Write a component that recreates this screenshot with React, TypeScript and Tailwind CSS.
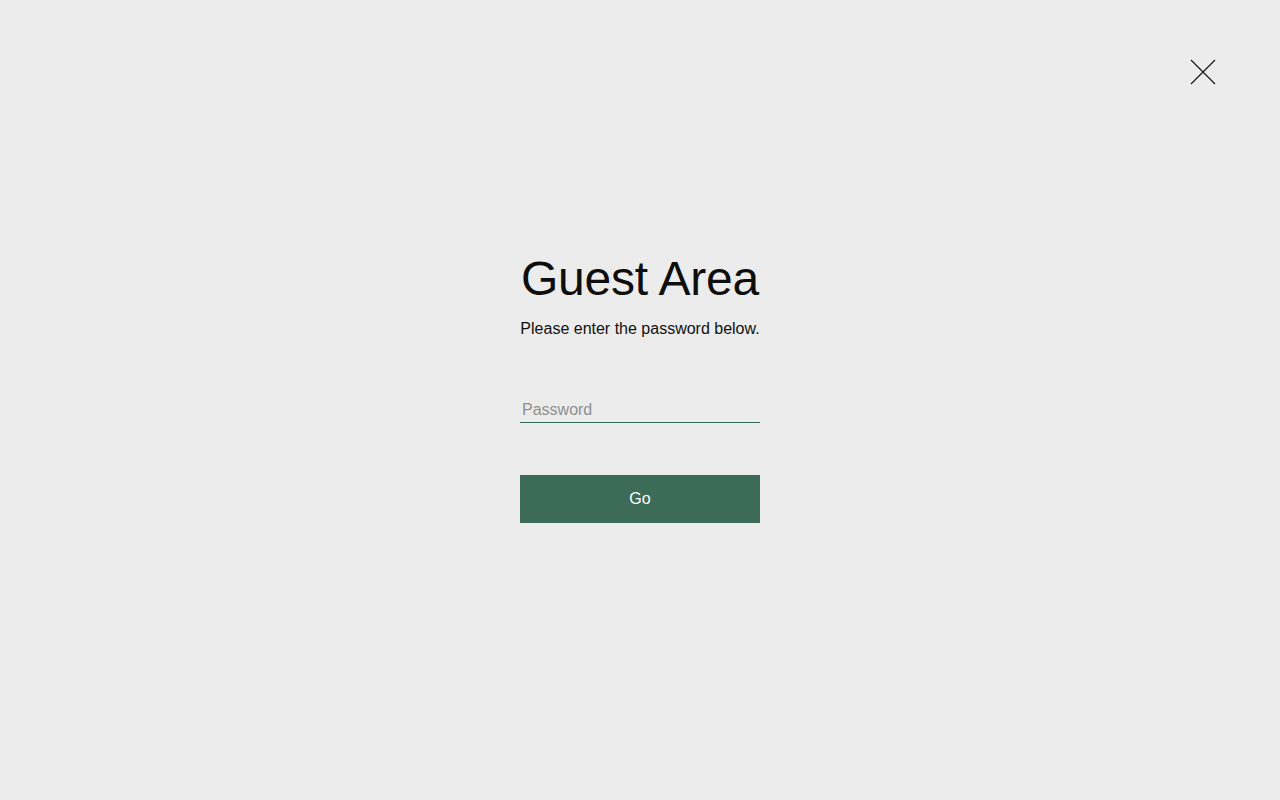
export default function App() {
  return (
    <div
      className="relative min-h-[800px] w-full bg-[#ececec] text-[#111]"
      style={{ fontFamily: '"Liberation Sans", Arial, sans-serif' }}
    >
      {/* Close */}
      <button className="absolute right-[64px] top-[59px] h-[26px] w-[26px]" aria-label="Close">
        <svg viewBox="0 0 26 26" className="h-[26px] w-[26px]" fill="none" stroke="#111" strokeWidth="1.1">
          <path d="M1 1 L25 25 M25 1 L1 25" />
        </svg>
      </button>

      <main className="flex justify-center pt-[255px]">
        <div className="flex w-[240px] flex-col items-center">
          <h1 className="whitespace-nowrap text-center text-[48px] leading-none font-normal tracking-[-0.2px] text-[#0e0e0e]">
            Guest Area
          </h1>
          <p className="mt-[14px] whitespace-nowrap text-center text-[16px] leading-6 text-[#111]">
            Please enter the password below.
          </p>

          <div className="mt-[57px] w-full border-b border-[#2f6a52]">
            <input
              type="password"
              placeholder="Password"
              className="block h-[24px] w-full bg-transparent px-[2px] text-[16px] outline-none placeholder:text-[#8f8f8f]"
            />
          </div>

          <button className="mt-[52px] h-[48px] w-full bg-[#3c6b58] text-[16px] text-white">Go</button>
        </div>
      </main>
    </div>
  );
}
